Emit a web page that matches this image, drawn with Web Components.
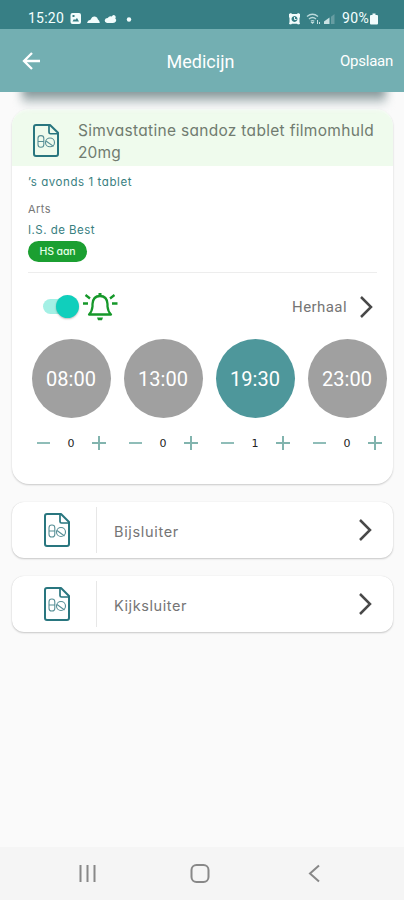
<!DOCTYPE html>
<html lang="nl">
<head>
<meta charset="utf-8">
<title>Medicijn</title>
<style>
html,body{margin:0;height:100%;background:#fafafa}
body{font-family:Inter,"Open Sans",sans-serif;overflow:hidden}
</style>
</head>
<body>
<medicine-app></medicine-app>
<script>
const define = (name, html, setup) => {
  const t = document.createElement('template');
  t.innerHTML = html;
  customElements.define(name, class extends HTMLElement {
    connectedCallback() {
      if (this.shadowRoot) return;
      const root = this.attachShadow({mode: 'open'});
      root.appendChild(t.content.cloneNode(true));
      if (setup) setup(this, root);
    }
  });
};

// Text label whose tracking adapts to the width given in "w".
define('ui-label', `<style>:host{display:block;white-space:nowrap;font-feature-settings:"cv11" 1}span{display:inline-block}</style><span><slot></slot></span>`,
  (el, root) => {
    const w = +el.getAttribute('w'), s = root.querySelector('span');
    const n = el.textContent.length;
    if (w) s.style.letterSpacing = ((w - s.getBoundingClientRect().width) / n) + 'px';
  });

define('status-bar', `<style>
:host{display:flex;height:29px;background:#377f85;align-items:center;box-sizing:border-box;padding:7px 24px 0 28px;color:#f4ffff;font:14px/20px Roboto,sans-serif}
svg{display:block;flex:none}.sp{flex:1}
</style>
<ui-label w="36">15:20</ui-label>
<svg width="70" height="16" viewBox="0 0 70 16" fill="#f2fcfc">
<path fill-rule="evenodd" d="M8.5 3h6.500q2 0 2 2v7q0 2-2 2H8.500q-2 0-2-2V5q0-2 2-2zM8.5 11.500h6.500l-2-3.400-2 2-1-1.200zM8.500 5v2h2V5z"/>
<path d="M23 13q.5-2.800 3.500-3.200Q28 6 31 6.500q2.500.5 3 3 1.500.8 1.800 3.500z"/>
<path d="M43 13q-2.500-.5-2.300-2.700.5-2.300 3-2.300 1.500-2.300 4-1.500Q49 4 51 5.500q1.500 1.500.3 3 1.500 1 .7 2.800-.8 1.700-3 1.700z"/>
<circle cx="65" cy="9.500" r="2.200"/></svg>
<div class="sp"></div>
<svg width="53" height="16" viewBox="0 0 53 16">
<path fill="#f2fcfc" fill-rule="evenodd" d="M0 4l2-1 1 1h5l1-1 2 1v3l-.5 1v4l.5 2-2 .5-1-.7H3l-1 .7-2-.5.500-2V8L0 7zM5.500 6a3 3 0 1 0 .01 0z"/><path d="M5.500 7v2.500h2" fill="none" stroke="#e4f4f5"/>
<g fill="none" stroke="#b9d9db" stroke-width="1.300"><path d="M18 6.500q5.500-4.500 11 0M20 9q3.500-3 7 0M21.800 11.200q1.700-1.300 3.500 0"/></g><path d="M23.500 14l-2-2h4zM28 10h1v4h-1zM30 12h1v2h-1z" fill="#c5e0e1"/>
<path d="M35 14v-2.500l5.500-4V14z" fill="#cae2e4"/><path d="M42 14V6.800L45.500 4v10z" fill="#669da2"/></svg>
<ui-label w="27">90%</ui-label>
<svg width="11" height="16" viewBox="0 0 11 16" fill="#f2fcfc"><path d="M3.500 3.500h3V5H8q1 0 1 1v7.500q0 1-1 1H2q-1 0-1-1V6q0-1 1-1h1.500z"/></svg>`);

define('app-bar', `<style>
:host{display:block;height:63px;position:relative;color:#fff;font-family:Roboto,sans-serif}
.shade{position:absolute;left:22px;right:18px;top:55px;height:20px;background:linear-gradient(#738789 30%,#94a4a6 50%,#d3dadbb0);filter:blur(5px)}
.bar{position:relative;height:100%;box-sizing:border-box;background:#73afb2;display:grid;grid-template-columns:1fr auto 1fr;align-items:center;padding:1px 11px 0 22px}
svg{display:block}.t{font-size:18px;margin-right:14px}.s{font-size:15px;justify-self:end}
</style><div class="shade"></div><div class="bar">
<svg width="19" height="20" viewBox="0 0 19 20" fill="none" stroke="#fff" stroke-width="2.300"><path d="M18 10H2M10 2L2 10l8 8"/></svg>
<ui-label class="t" w="68">Medicijn</ui-label><ui-label class="s" w="53">Opslaan</ui-label></div>`);

define('leaflet-icon', `<style>:host{display:block;width:26px;height:34px;flex:none}svg{display:block;width:100%;height:100%}</style>
<svg viewBox="0 0 26 34" fill="none" stroke="#29767f" preserveAspectRatio="none">
<path stroke-width="2" stroke-linejoin="round" d="M3 1h14l8 8v22q0 2-2 2H3q-2 0-2-2V3q0-2 2-2z"/>
<path stroke-width="1.700" d="M16 1v7.500q0 1.500 1.500 1.500H25"/>
<g stroke="#578f96" stroke-width="1.100"><rect x="5" y="12" width="5.800" height="12" rx="2.800"/><path d="M5 18h6M13 17.500l7.500 5.500"/><circle cx="17" cy="19" r="4.500"/></g></svg>`);

define('chevron-icon', `<style>:host{display:block;width:14px;height:24px;flex:none}svg{display:block}</style>
<svg width="14" height="24" viewBox="0 0 14 24" fill="none" stroke="#494949" stroke-width="2.500"><path d="M2 2L12 12 2 22"/></svg>`);

define('toggle-switch', `<style>:host{display:block;width:36px;height:24px;position:relative}
.k{position:absolute;left:0;top:4px;width:32px;height:15px;border-radius:8px;background:#a4f0e5}
.b{position:absolute;right:0;top:0;width:23px;height:23px;border-radius:50%;background:#10cfbc;box-shadow:0 1px 2px #0004}</style><div class="k"></div><div class="b"></div>`);

define('bell-icon', `<style>:host{display:block}svg{display:block}</style>
<svg width="36" height="30" viewBox="0 0 36 30" fill="none" stroke="#16982a" stroke-width="2.300">
<path stroke-linejoin="round" d="M6 22.500q3-2.800 3.500-8V12q.5-8 7.500-8t7.500 8v2.500q.5 5.200 3.500 8z"/><path d="M17 1v3" stroke-width="3"/><path d="M14 25.500h6l-1 2.700h-4z" fill="#16982a" stroke="none"/>
<path d="M2.500 3L7 6.500M0 11.500h5M31.500 3L27 6.500M29 11.500h5.500"/></svg>`);

define('dose-time', `<style>
:host{display:flex;flex-direction:column;align-items:center;width:92px}
.c{width:79px;height:79px;border-radius:50%;background:#a0a0a0;display:grid;place-items:center;color:#fff;font:20px/24px Roboto,sans-serif}
:host([active]) .c{background:#4e979b}
.step{display:flex;width:70px;height:16px;margin-top:17px;align-items:center;justify-content:space-between;color:#222;font:11px/14px "DejaVu Sans",sans-serif}
svg{display:block}.n{padding-top:2px}
</style><div class="c"><ui-label class="time"></ui-label></div><div class="step">
<svg width="14" height="14" stroke="#8fbdb8" stroke-width="2"><path d="M1 7h13"/></svg><div class="n"><slot></slot></div>
<svg width="14" height="14" stroke="#82b4ae" stroke-width="2"><path d="M0 7h14M7 0v14"/></svg></div>`,
 (el, root) => { const l = root.querySelector('.time'); l.textContent = el.getAttribute('time'); });

define('medicine-card', `<style>
:host{display:block;height:375px;box-sizing:border-box;border-radius:17px;background:#fff;overflow:hidden;box-shadow:0 1px 2px #0003}
.head{margin-top:4px;height:53px;box-sizing:border-box;padding-top:2px;border-radius:13px 13px 0 0;background:#effbed;display:flex;padding-left:21px;align-items:center;color:#717b70;font-size:15.500px;line-height:22.500px;box-shadow:0 -3px 4px #effbed}
.head leaflet-icon{height:33px}
.name{margin-left:19px;padding-top:3px}
.body{padding:0 16px}.g{color:#38807f;font-size:11.500px;line-height:20px}
.a{padding-top:6px}.ar{font-size:11px;line-height:20px;padding-top:7px;color:#777}.doc{padding-top:1px}
.pill{width:59px;height:21px;border-radius:11px;background:#1b9f31;color:#e6ffe8;display:grid;place-items:center;font-size:10.500px;line-height:20px;margin-top:1px;font-weight:500}
.line{height:1px;background:#ededed;margin-top:10px}
.row{height:61px;display:flex;align-items:center;padding:3px 4px 0 15px}
.bell{margin-left:4px}.h{margin-left:auto;margin-right:12px;color:#757575;font:15px/20px Roboto,sans-serif}
.times{display:flex;margin-left:13px;margin-top:2px;width:368px}
</style>
<div class="head"><leaflet-icon></leaflet-icon><div class="name"><ui-label w="296">Simvastatine sandoz tablet filmomhuld</ui-label><ui-label w="43">20mg</ui-label></div></div>
<div class="body"><ui-label class="g a" w="104">’s avonds 1 tablet</ui-label>
<ui-label class="ar" w="23">Arts</ui-label><ui-label class="g doc" w="67">I.S. de Best</ui-label>
<div class="pill"><ui-label w="36">HS aan</ui-label></div><div class="line"></div>
<div class="row"><toggle-switch></toggle-switch><bell-icon class="bell"></bell-icon><ui-label class="h" w="55">Herhaal</ui-label><chevron-icon></chevron-icon></div></div>
<div class="times"><dose-time time="08:00">0</dose-time><dose-time time="13:00">0</dose-time><dose-time time="19:30" active>1</dose-time><dose-time time="23:00">0</dose-time></div>`);

define('link-card', `<style>
:host{display:flex;height:56px;box-sizing:border-box;border-radius:12px;background:#fff;box-shadow:0 1px 2px #0003,0 0 1px #0002;align-items:center;padding:0 21px 0 32px}
.d{width:1px;height:46px;background:#e7e7e7;margin-left:26px;margin-right:17px}.l{color:#757575;font-size:14.500px;line-height:20px;padding-top:3px}chevron-icon{margin-left:auto}
</style><leaflet-icon></leaflet-icon><div class="d"></div><ui-label class="l"></ui-label><chevron-icon></chevron-icon>`,
 (el, root) => {
  const old = root.querySelector('.l'), l = document.createElement('ui-label');
  l.className = 'l'; l.setAttribute('w', el.getAttribute('w')); l.textContent = el.getAttribute('label'); old.replaceWith(l);
 });

define('nav-bar', `<style>:host{display:grid;grid-template-columns:1fr 24px 1fr;height:53px;background:#f5f5f5;align-items:center;padding:0 84px 0 78px;box-sizing:border-box}svg{display:block}svg:last-child{justify-self:end}</style>
<svg width="20" height="20" fill="none" stroke="#888" stroke-width="2"><path d="M2.500 1v17M9.500 1v17M16.500 1v17"/></svg>
<svg width="24" height="20" viewBox="0 0 24 20" fill="none" stroke="#888" stroke-width="2"><rect x="4.500" y="1" width="17" height="17" rx="5"/></svg>
<svg width="12" height="20" fill="none" stroke="#888" stroke-width="2"><path d="M11 1.500L2 9.500l9 8"/></svg>`);

define('medicine-app', `<style>:host{display:flex;flex-direction:column;width:404px;height:900px;background:#fafafa}
main{flex:1;padding:17px 11px 0 12px;display:flex;flex-direction:column;gap:18px}app-bar{z-index:1}</style>
<status-bar></status-bar><app-bar></app-bar><main><medicine-card></medicine-card><link-card label="Bijsluiter" w="65"></link-card><link-card label="Kijksluiter" w="73"></link-card></main><nav-bar></nav-bar>`);
</script>
</body>
</html>
